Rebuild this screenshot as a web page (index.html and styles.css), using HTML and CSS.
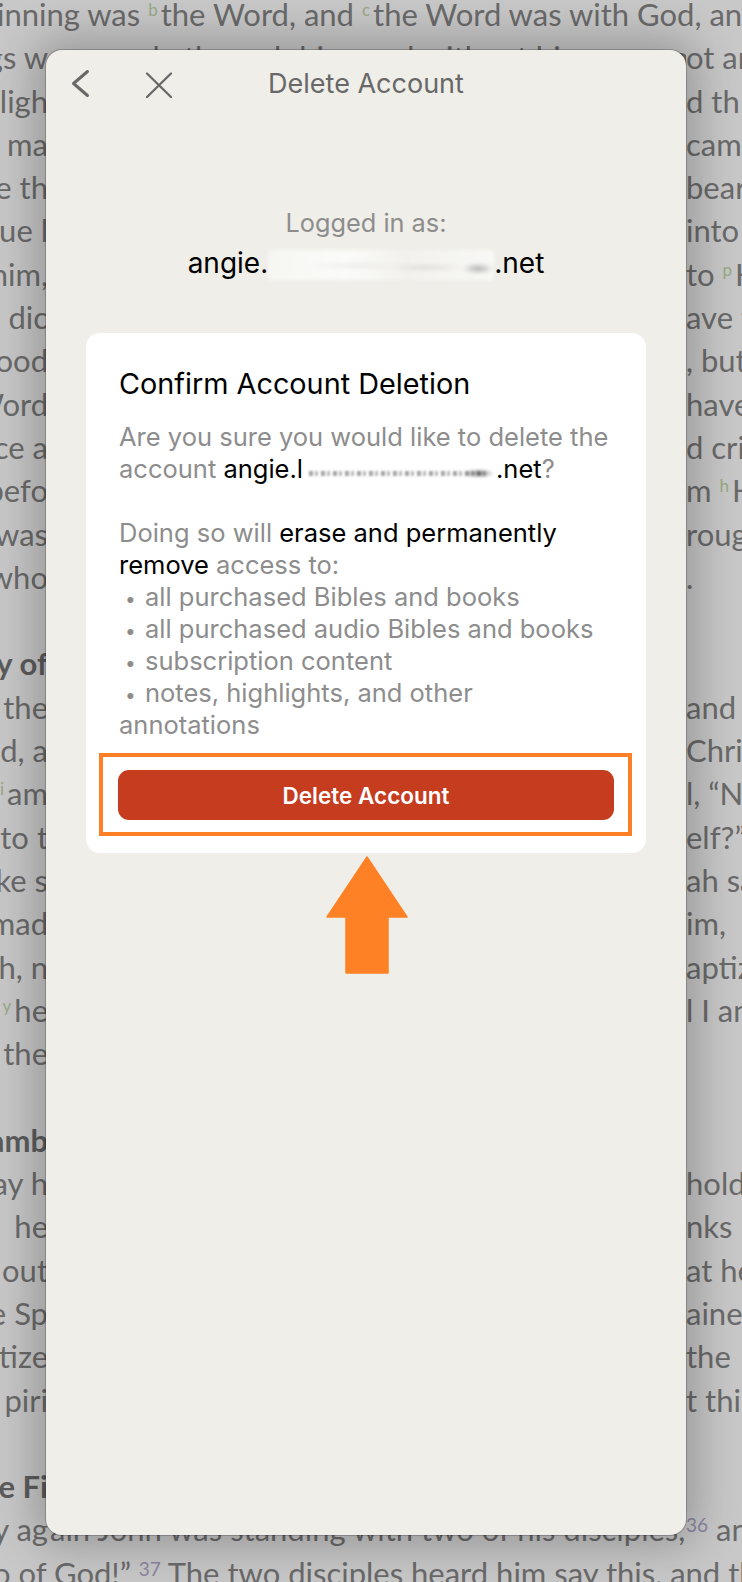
FILE: index.html
```html
<!DOCTYPE html>
<html lang="en">
<head>
<meta charset="utf-8">
<title>Delete Account</title>
<link rel="stylesheet" href="styles.css">
</head>
<body>
<div class="page">
  <div class="row full r0">inning was <sup class="fn">b</sup>the Word, and <sup class="fn">c</sup>the Word was with God, and the Word</div>
  <div class="row"><span class="l"><span>gs w</span></span><span class="m">ere made through him, and without him was not any thing made that was made</span><span class="r"><span>ot an</span></span></div>
  <div class="row"><span class="l"><span>e ligh</span></span><span class="r"><span>d th</span></span></div>
  <div class="row"><span class="l"><span>ma</span></span><span class="r"><span>came</span></span></div>
  <div class="row"><span class="l"><span>e th</span></span><span class="r"><span>bear</span></span></div>
  <div class="row"><span class="l"><span>ue l</span></span><span class="r"><span>into</span></span></div>
  <div class="row"><span class="l"><span>him,</span></span><span class="r"><span>to <sup class="fn">p</sup>H</span></span></div>
  <div class="row"><span class="l"><span>o dic</span></span><span class="r"><span>ave t</span></span></div>
  <div class="row"><span class="l"><span>ood</span></span><span class="r"><span>, but</span></span></div>
  <div class="row"><span class="l"><span>Word</span></span><span class="r"><span>have</span></span></div>
  <div class="row"><span class="l"><span>ce a</span></span><span class="r"><span>d crie</span></span></div>
  <div class="row"><span class="l"><span>befo</span></span><span class="r"><span>m <sup class="fn">h</sup>H</span></span></div>
  <div class="row"><span class="l"><span>was</span></span><span class="r"><span>roug</span></span></div>
  <div class="row"><span class="l"><span>who</span></span><span class="r"><span>.</span></span></div>
  <div class="row"></div>
  <div class="row"><span class="l bold"><span>y of</span></span></div>
  <div class="row"><span class="l"><span>the</span></span><span class="r"><span>and</span></span></div>
  <div class="row"><span class="l"><span>d, a</span></span><span class="r"><span>Chris</span></span></div>
  <div class="row"><span class="l"><span><sup class="fn">i</sup>am</span></span><span class="r"><span>l, “No</span></span></div>
  <div class="row"><span class="l"><span>to t</span></span><span class="r"><span>elf?”</span></span></div>
  <div class="row"><span class="l"><span>ke s</span></span><span class="r"><span>ah sa</span></span></div>
  <div class="row"><span class="l"><span>mad</span></span><span class="r"><span>im,</span></span></div>
  <div class="row"><span class="l"><span>h, n</span></span><span class="r"><span>aptiz</span></span></div>
  <div class="row"><span class="l"><span><sup class="fn">y</sup>he</span></span><span class="r"><span>l I am</span></span></div>
  <div class="row"><span class="l"><span>the</span></span></div>
  <div class="row"></div>
  <div class="row"><span class="l bold"><span>amb</span></span></div>
  <div class="row"><span class="l"><span>ay h</span></span><span class="r"><span>hold,</span></span></div>
  <div class="row"><span class="l"><span>he</span></span><span class="r"><span>nks b</span></span></div>
  <div class="row"><span class="l"><span>out</span></span><span class="r"><span>at he</span></span></div>
  <div class="row"><span class="l"><span>e Sp</span></span><span class="r"><span>ained</span></span></div>
  <div class="row"><span class="l"><span>tize</span></span><span class="r"><span>the</span></span></div>
  <div class="row"><span class="l"><span>piri</span></span><span class="r"><span>t thi</span></span></div>
  <div class="row"></div>
  <div class="row"><span class="l bold"><span>e Fi</span></span></div>
  <div class="row"><span class="l"><span>ay ag</span></span><span class="m">ain John was standing with two of his disciples,</span><span class="r"><span><sup class="vn">36</sup> and</span></span></div>
  <div class="row full r36">o of God!” <sup class="vn">37</sup> The two disciples heard him say this, and they</div>
</div>

<div class="modal">
  <div class="hdr">
    <div class="hdr-icons">
      <svg class="ic-back" width="22" height="32" viewBox="0 0 22 32"><path d="M17.5 3.5 L3.5 15.5 L17.5 27.5" fill="none" stroke="#686868" stroke-width="3" stroke-linecap="round" stroke-linejoin="round"/></svg>
      <svg class="ic-close" width="30" height="30" viewBox="0 0 30 30"><path d="M3 4.5 L27 28 M27 4.5 L3 28" fill="none" stroke="#686868" stroke-width="2.3" stroke-linecap="round"/></svg>
    </div>
    <div class="hdr-title">Delete Account</div>
    <div></div>
  </div>

  <div class="logged">Logged in as:</div>
  <div class="email">angie.<span class="blur1"></span>.net</div>

  <div class="card">
    <div class="card-title">Confirm Account Deletion</div>
    <div class="card-body">
      <p class="p1">Are you sure you would like to delete the<br>account <span class="k">angie.l<span class="blur2"></span>.net</span>?</p>
      <p>Doing so will <span class="k">erase and permanently<br>remove</span> access to:</p>
      <div class="li"><span class="dot">•</span>all purchased Bibles and books</div>
      <div class="li"><span class="dot">•</span>all purchased audio Bibles and books</div>
      <div class="li"><span class="dot">•</span>subscription content</div>
      <div class="li"><span class="dot">•</span>notes, highlights, and other<br>annotations</div>
    </div>
    <div class="hl"><button class="del">Delete Account</button></div>
  </div>

  <svg class="arrow" width="82" height="118" viewBox="0 0 82 118"><polygon points="41,1 81,61 62,61 62,117 20,117 20,61 1,61" fill="#ff8126" stroke="#ff8126" stroke-width="1.5" stroke-linejoin="round"/></svg>
</div>
</body>
</html>
```

FILE: styles.css
```css
* { box-sizing: border-box; }
html, body { margin: 0; padding: 0; }
body {
  width: 742px;
  height: 1582px;
  overflow: hidden;
  position: relative;
  background: #c8c8c8;
  font-family: Lato, "Open Sans", sans-serif;
}

/* background reader page */
.page {
  margin-top: -7px;
  color: #6a6a6a;
  font-size: 31px;
  line-height: 43.3px;
}
.row {
  display: flex;
  height: 43.3px;
  white-space: nowrap;
  overflow: visible;
}
.full { display: block; }
.r0 { text-indent: -3px; }
.r36 { text-indent: -7px; }
.l {
  width: 48px;
  flex: none;
  display: flex;
  justify-content: flex-end;
}
.bold { font-weight: 700; color: #5c5c5c; }
.m {
  flex: 1;
  overflow: hidden;
  padding-left: 2px;
}
.r {
  width: 56px;
  flex: none;
  margin-left: auto;
}
sup.fn {
  color: #98a884;
  font-size: 17px;
  vertical-align: 10px;
  line-height: 0;
  margin-right: 3px;
}
sup.vn {
  color: #8b87a2;
  font-size: 19px;
  vertical-align: 9px;
  line-height: 0;
}

/* modal sheet */
.modal {
  position: absolute;
  left: 46px;
  top: 50px;
  width: 640px;
  height: 1485px;
  background: #efeee9;
  border-radius: 16px;
  box-shadow: 0 0 0 1px rgba(0,0,0,0.2), 0 0 44px 12px rgba(0,0,0,0.24);
  display: flex;
  flex-direction: column;
  font-family: Inter, "Liberation Sans", sans-serif;
}
.hdr {
  height: 68px;
  display: grid;
  grid-template-columns: 1fr auto 1fr;
  align-items: center;
  padding: 0 24px;
}
.hdr-icons {
  display: flex;
  align-items: center;
  gap: 52px;
}
.ic-back, .ic-close { display: block; }
.hdr-title {
  font-size: 27px;
  color: #686868;
  line-height: 34px;
}
.logged {
  margin-top: 90px;
  text-align: center;
  font-size: 25.3px;
  line-height: 30px;
  color: #8d8d8d;
}
.email {
  margin-top: 8px;
  text-align: center;
  font-size: 28px;
  line-height: 34px;
  color: #000;
}
.blur1 {
  display: inline-block;
  width: 226px;
  height: 30px;
  vertical-align: -7px;
  background:
    radial-gradient(ellipse 16px 5px at 93% 62%, rgba(70,70,70,0.45), transparent),
    radial-gradient(ellipse 40px 3px at 70% 58%, rgba(130,130,130,0.28), transparent),
    radial-gradient(ellipse 50px 3px at 38% 52%, rgba(160,160,160,0.22), transparent),
    linear-gradient(90deg, #f6f6f3, #fbfbf9 35%, #f2f1ed 60%, #f8f8f6);
  filter: blur(2px);
}

.card {
  margin: 53px 40px 0;
  background: #fff;
  border-radius: 14px;
  padding: 33px 33px 17px;
}
.card-title {
  font-size: 28.8px;
  line-height: 36px;
  color: #000;
}
.card-body {
  margin-top: 19px;
  font-size: 25.5px;
  line-height: 32px;
  color: #8d8d8d;
  white-space: nowrap;
}
.card-body p { margin: 0; }
.card-body .p1 { margin-bottom: 32px; }
.k { color: #000; }
.blur2 {
  display: inline-block;
  width: 193px;
  height: 24px;
  vertical-align: -5px;
  background:
    radial-gradient(ellipse 16px 5px at 91% 60%, rgba(60,60,60,0.6), transparent),
    repeating-linear-gradient(90deg, rgba(100,100,100,0.6) 0 4px, transparent 4px 6px, rgba(100,100,100,0.45) 6px 9px, transparent 9px 12px) 6px 12px / 178px 5px no-repeat,
    #fff;
  filter: blur(0.9px);
}
.li { height: 32px; }
.li:last-child { height: 64px; }
.dot {
  display: inline-block;
  width: 26px;
  padding-left: 6px;
  font-size: 19px;
  line-height: 1;
  color: #8d8d8d;
}
.hl {
  margin: 12px -19px 0 -20px;
  border: 4px solid #ff7f27;
  padding: 13px 14px 12px 15px;
}
.del {
  display: block;
  width: 100%;
  height: 50px;
  border: none;
  border-radius: 11px;
  background: #c63c1f;
  color: #fff;
  font-family: Inter, "Liberation Sans", sans-serif;
  font-weight: 600;
  font-size: 22.5px;
  padding: 0;
}
.arrow {
  display: block;
  margin: 3px auto 0;
  position: relative;
  left: 1px;
}
```
